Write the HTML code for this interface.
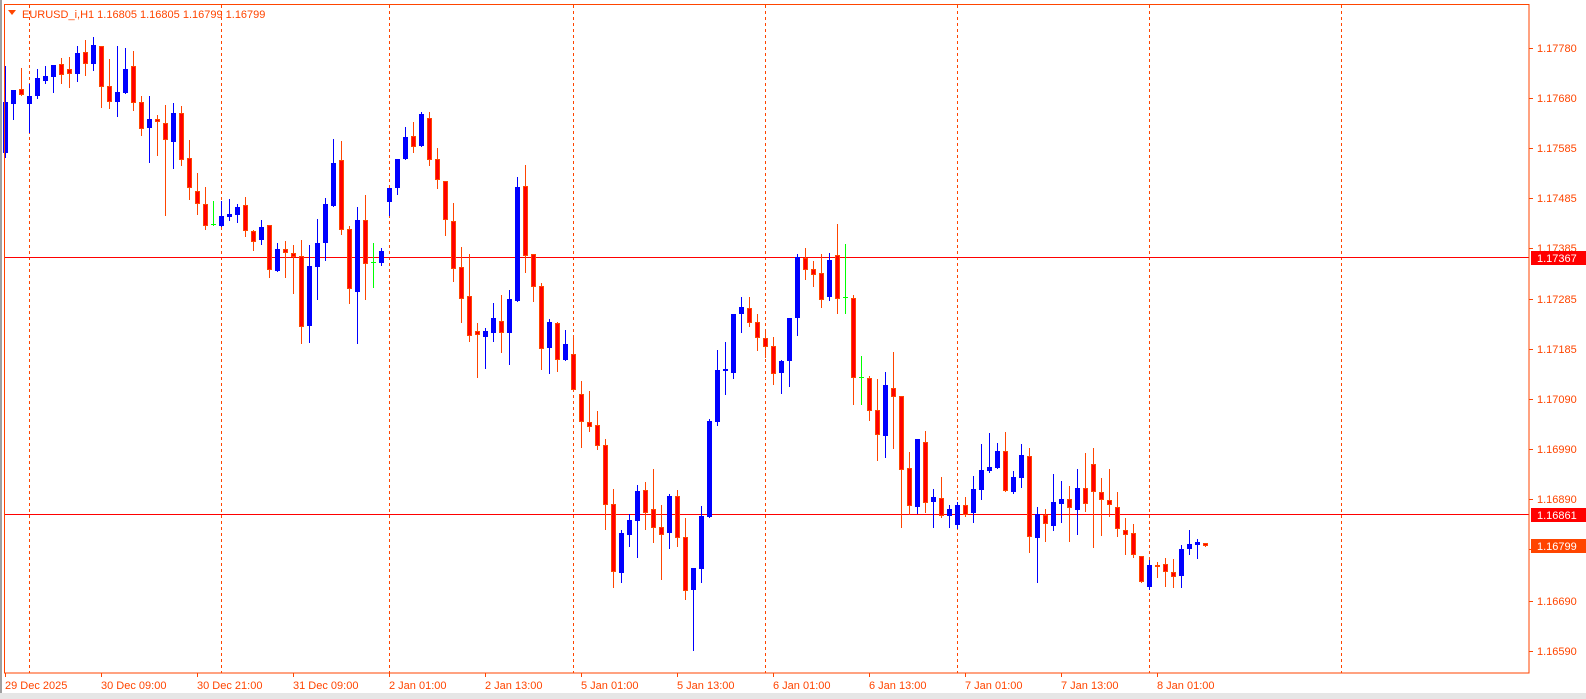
<!DOCTYPE html>
<html><head><meta charset="utf-8">
<style>
html,body{margin:0;padding:0;background:#fff;}
body{width:1586px;height:699px;overflow:hidden;position:relative;font-family:"Liberation Sans",sans-serif;}
svg{position:absolute;left:0;top:0;}
text{font-family:"Liberation Sans",sans-serif;font-size:11px;}
</style></head>
<body>
<svg id="c" width="1586" height="699" xmlns="http://www.w3.org/2000/svg">
<rect x="0" y="0" width="1586" height="699" fill="#fff"/>
<rect x="0" y="0" width="2" height="699" fill="#a0a0a0"/>
<rect x="0" y="693" width="1586" height="6" fill="#e6e6e6"/>
<g id="grid" stroke="#ff4500" stroke-width="1" stroke-dasharray="3,3"></g>
<line x1="4" y1="257.5" x2="1529" y2="257.5" stroke="#ff0000"/>
<line x1="4" y1="514.5" x2="1529" y2="514.5" stroke="#ff0000"/>
<g id="cand"></g>
<rect x="4.5" y="4.5" width="1524.5" height="668.5" fill="none" stroke="#ff4500"/>
<polygon points="8,10 16,10 12,15" fill="#ff4500"/>
<text x="22" y="18" fill="#ff4500">EURUSD_i,H1  1.16805 1.16805 1.16799 1.16799</text>
<g id="axis" fill="#ff4500"></g>
<rect x="1531" y="251" width="55" height="14" fill="#ff0000"/>
<text x="1537" y="262" fill="#fff">1.17367</text>
<rect x="1531" y="508" width="55" height="14" fill="#ff0000"/>
<text x="1537" y="519" fill="#fff">1.16861</text>
<rect x="1531" y="539" width="55" height="14" fill="#ff4500"/>
<text x="1537" y="550" fill="#fff">1.16799</text>
</svg>
<script>
var NS="http://www.w3.org/2000/svg";
function el(p,t,a,txt){var e=document.createElementNS(NS,t);for(var k in a)e.setAttribute(k,a[k]);if(txt)e.textContent=txt;p.appendChild(e);return e;}
var grid=document.getElementById('grid');
[29,221,389,573,765,957,1149,1341].forEach(function(x){el(grid,'line',{x1:x+.5,y1:5,x2:x+.5,y2:673});});
var ax=document.getElementById('axis');
var P=[["1.17780",48],["1.17680",98],["1.17585",148],["1.17485",198],["1.17385",248],["1.17285",299],["1.17185",349],["1.17090",399],["1.16990",449],["1.16890",499],["1.16790",549],["1.16690",601],["1.16590",651]];
P.forEach(function(p){el(ax,'rect',{x:1529,y:p[1],width:4,height:1});el(ax,'text',{x:1537,y:p[1]+4},p[0]);});
var T=["29 Dec 2025","30 Dec 09:00","30 Dec 21:00","31 Dec 09:00","2 Jan 01:00","2 Jan 13:00","5 Jan 01:00","5 Jan 13:00","6 Jan 01:00","6 Jan 13:00","7 Jan 01:00","7 Jan 13:00","8 Jan 01:00"];
T.forEach(function(t,i){var x=5+96*i;el(ax,'rect',{x:x,y:673,width:1,height:4});el(ax,'text',{x:x,y:689},t);});
var D="5 b 102 153 66 157|13 b 90 104 90 119|21 r 89 95 68 95|29 b 96 104 84 132|37 b 78 96 69 98|45 b 76 81 66 83|53 b 65 77 65 92|61 r 64 75 58 83|69 r 69 74 57 87|77 b 53 74 46 81|85 r 52 64 40 75|93 b 45 64 37 70|101 r 46 87 46 107|109 r 86 102 59 108|117 b 92 102 46 116|125 b 69 93 48 93|133 r 66 103 51 110|141 r 102 129 96 135|149 b 119 128 96 162|157 r 119 122 115 155|165 r 123 140 105 215|173 b 113 142 103 168|181 r 113 160 106 165|189 r 158 188 140 199|197 r 191 204 173 214|205 r 204 226 187 229|213 g 224 224 201 225|221 b 216 226 201 226|229 b 214 217 199 220|237 b 207 215 204 222|245 r 205 231 197 236|253 r 231 242 230 250|261 b 227 240 220 244|269 r 225 270 225 277|277 b 249 271 243 271|285 r 249 253 241 277|293 r 253 257 245 293|301 r 256 327 240 343|309 b 266 326 245 342|317 b 243 267 219 299|325 b 204 243 198 260|333 b 163 206 139 206|341 r 160 230 141 234|349 r 229 289 226 303|357 b 220 292 207 343|365 r 220 264 195 299|373 g 262 262 243 287|381 b 251 263 248 265|389 b 188 202 188 215|397 b 159 188 159 194|405 b 137 159 127 159|413 r 136 147 122 152|421 b 114 146 112 146|429 r 118 160 112 165|437 r 159 180 148 188|445 r 181 220 181 235|453 r 221 269 203 281|461 r 267 299 247 322|469 r 296 336 254 341|477 r 331 335 323 377|485 b 331 337 328 368|493 b 318 333 303 341|501 r 321 333 295 352|509 b 299 333 290 364|517 b 187 301 177 301|525 r 186 256 165 272|533 r 254 287 254 301|541 r 286 349 283 369|549 b 322 348 319 373|557 r 323 360 322 371|565 b 344 360 330 360|573 r 354 390 338 390|581 r 394 422 381 447|589 r 422 427 391 431|597 r 425 446 411 449|605 r 445 505 439 529|613 r 504 572 489 587|621 b 533 573 530 582|629 b 520 535 514 546|637 b 491 521 485 557|645 r 490 513 482 529|653 r 509 528 469 542|661 r 527 535 505 579|669 b 496 533 494 548|677 r 496 538 490 546|685 r 537 591 518 599|693 b 568 590 568 650|701 b 516 569 506 582|709 b 421 517 419 517|717 b 370 422 350 425|725 b 369 371 342 394|733 b 314 373 314 378|741 b 307 314 297 332|749 r 308 323 297 326|757 r 322 338 314 350|765 r 338 347 332 357|773 r 346 374 337 384|781 b 361 373 360 393|789 b 318 361 318 386|797 b 257 318 254 335|805 r 258 270 248 279|813 r 269 275 261 286|821 r 273 300 254 307|829 b 260 297 253 300|837 r 255 299 224 313|845 g 297 297 244 313|853 r 298 378 295 404|861 g 377 377 356 404|869 r 378 411 376 420|877 r 410 435 379 460|885 b 385 436 372 457|893 r 388 397 352 448|901 r 396 470 396 527|909 r 468 506 452 514|917 b 439 507 439 513|925 r 442 503 431 512|933 b 497 502 489 527|941 r 498 516 477 517|949 b 509 516 505 527|957 b 505 525 502 528|965 r 505 515 497 516|973 b 489 513 476 522|981 b 470 490 444 499|989 b 467 471 433 472|997 b 451 468 443 468|1005 r 451 491 432 491|1013 b 477 492 471 493|1021 b 455 478 444 487|1029 r 456 537 448 552|1037 b 514 538 507 582|1045 r 515 524 509 541|1053 b 502 526 474 530|1061 b 499 504 481 522|1069 r 499 508 486 541|1077 b 488 510 469 534|1085 r 488 504 453 511|1093 r 464 492 448 547|1101 r 492 500 478 535|1109 r 500 505 469 516|1117 r 507 529 492 536|1125 r 530 535 518 554|1133 r 533 555 524 557|1141 r 556 582 556 582|1149 b 565 587 560 589|1157 r 565 566 562 577|1165 r 564 572 558 586|1173 r 572 577 559 587|1181 b 549 576 545 587|1189 b 544 549 530 554|1197 b 542 545 539 558|1205 r 543 546 543 546";
var cg=document.getElementById('cand');
D.split('|').forEach(function(s){var a=s.split(' ');var x=+a[0],c=a[1],bt=+a[2],bb=+a[3],wt=+a[4],wb=+a[5];
 var col=c=='b'?'#0000ff':(c=='g'?'#00ff00':'#ff4500');
 if(wb>wt)el(cg,'rect',{x:x,y:wt,width:1,height:wb-wt+1,fill:col});
 if(c=='g'){el(cg,'rect',{x:x-2,y:bt,width:5,height:1,fill:col});return;}
 var h=Math.max(bb-bt,2);
 if(c=='b')el(cg,'rect',{x:x-2,y:bt,width:5,height:h,fill:'#0000ff'});
 else{el(cg,'rect',{x:x-2,y:bt,width:5,height:h,fill:'#ff4500'});if(h>2)el(cg,'rect',{x:x-1,y:bt+1,width:3,height:h-2,fill:'#ff0000'});}
});
</script>
</body></html>
